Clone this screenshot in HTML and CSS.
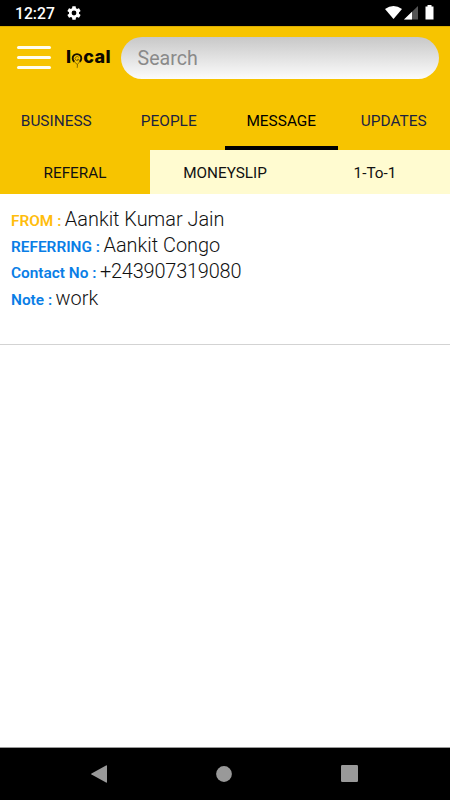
FILE: index.html
```html
<!DOCTYPE html>
<html lang="en">
<head>
<meta charset="utf-8">
<title>Local</title>
<link rel="stylesheet" href="styles.css">
</head>
<body>
<div class="screen">
  <div class="status">
    <span class="clock">12:27</span>
    <svg class="gear" width="16" height="16" viewBox="0 0 24 24"><path fill="#fff" fill-rule="evenodd" d="M19.4 13c.1-.3.1-.7.1-1s0-.7-.1-1l2.200-1.700c.2-.2.2-.4.100-.6l-2-3.500c-.1-.2-.4-.3-.6-.2l-2.500 1c-.5-.4-1.100-.7-1.700-1L14.500 2.400c0-.2-.2-.4-.5-.4h-4c-.3 0-.5.200-.5.400L9.100 5c-.6.3-1.200.6-1.700 1L4.900 5c-.2-.1-.5 0-.6.2l-2 3.500c-.1.200-.1.400.1.600L4.600 11c-.1.300-.1.700-.1 1s0 .7.100 1l-2.200 1.700c-.2.200-.2.400-.1.600l2 3.500c.1.200.4.300.6.200l2.500-1c.5.400 1.100.7 1.700 1l.4 2.600c0 .2.200.4.5.4h4c.3 0 .5-.2.500-.4l.4-2.600c.6-.3 1.200-.6 1.700-1l2.500 1c.2.100.5 0 .6-.2l2-3.500c.1-.2.100-.4-.1-.6zM12 15.600a3.600 3.600 0 1 1 0-7.200 3.600 3.600 0 0 1 0 7.200z"/></svg>
    <svg class="signals" width="50" height="16" viewBox="0 0 50 16">
      <path fill="#fff" d="M0 4Q8.500-2 17 4L8.500 14z"/>
      <path fill="#555" d="M33 1v13.500H19z"/><path fill="#fff" d="M27 6.700v7.800h-8z"/>
      <path fill="#fff" d="M42.500 0h4v1.500h2v13h-8v-13h2z"/>
    </svg>
  </div>
  <header class="top">
    <div class="burger"><i></i><i></i><i></i></div>
    <div class="logo">
      <span>l</span>
      <svg width="12" height="18" viewBox="0 0 12 18"><path fill="none" stroke="#171100" stroke-width="1.900" d="M3.400 9.800A4.300 4.300 0 1 1 8.600 9.800"/><path fill="none" stroke="#6b5600" stroke-width=".8" d="M3.500 9.600q1 2 3 2.800l2.300-2.800M6.500 12.400l-.3 3.400M7.800 5.400a2 2 0 1 0 .2 2h-2"/></svg>
      <span class="rest">cal</span>
    </div>
    <div class="search">Search</div>
  </header>
  <nav class="tabs"><span>BUSINESS</span><span>PEOPLE</span><span class="on">MESSAGE</span><span>UPDATES</span></nav>
  <nav class="subtabs"><span class="on">REFERAL</span><span>MONEYSLIP</span><span>1-To-1</span></nav>
  <main>
    <section class="item">
      <p><b class="from">FROM :</b> <span>Aankit Kumar Jain</span></p>
      <p><b>REFERRING :</b> <span>Aankit Congo</span></p>
      <p><b>Contact No :</b> <span class="phone">+243907319080</span></p>
      <p><b>Note :</b> <span>work</span></p>
    </section>
  </main>
  <footer class="nav">
    <svg width="16" height="18" viewBox="0 0 16 18"><path fill="#999" d="M15 .5Q16 0 16 1v16q0 1-1 .5L.5 9.500q-.6-.5 0-1z"/></svg>
    <svg width="16" height="16" viewBox="0 0 16 16"><circle cx="8" cy="8" r="7.900" fill="#999"/></svg>
    <svg width="17" height="17" viewBox="0 0 17 17"><rect width="17" height="17" rx="1.200" fill="#999"/></svg>
  </footer>
</div>
</body>
</html>
```
FILE: styles.css
```css
* { box-sizing: border-box; }
body { margin: 0; font-family: Roboto, "Liberation Sans", sans-serif; background: #fff; color: #111; }
.screen { width: 450px; height: 800px; display: flex; flex-direction: column; overflow: hidden; }
.status { height: 26px; background: #000; color: #fff; display: flex; align-items: center; padding: 1px 15px 1px; }
.clock { font-size: 15.700px; font-weight: 500; line-height: 24px; width: 51px; padding-top: 2px; }
.signals { margin-left: auto; }
.top { height: 64px; background: #f7c400; border-top: 1px solid #dcae00; display: flex; align-items: flex-start; padding: 10px 11px 0 17px; }
.burger { width: 34px; height: 23px; margin-top: 9px; display: flex; flex-direction: column; justify-content: space-between; }
.burger i { height: 3px; border-radius: 2px; background: #fffdf0; }
.logo { width: 55px; margin: 7px 0 0 15px; display: flex; align-items: flex-start; font-family: Inter, "Open Sans", sans-serif; font-weight: 800; font-size: 18px; line-height: 26px; color: #0c0900; letter-spacing: -.3px; }
.logo svg { margin: 8px 0 0; flex: none; }
.rest { letter-spacing: .3px; margin-left: .5px; }
.search { flex: 1; height: 42px; border-radius: 21px; background: linear-gradient(#c8c8c8, #fcfcfc); padding-left: 16.500px; font-size: 19.600px; line-height: 44px; color: #8a8a8a; }
.tabs { height: 60px; background: #f7c400; display: grid; grid-template-columns: repeat(4, 1fr); font-size: 15.400px; line-height: 62px; text-align: center; color: #1c2340; }
.tabs span { height: 60px; }
.tabs .on { border-bottom: 4px solid #000; color: #000; }
.subtabs { height: 44px; display: grid; grid-template-columns: repeat(3, 1fr); font-size: 15.300px; line-height: 46px; text-align: center; background: #fffbd0; }
.subtabs span { height: 44px; }
.subtabs .on { background: #f7c400; }
main { flex: 1; }
.item { height: 151px; padding: 13px 11px 0; border-bottom: 1px solid #d3d3d3; }
p { margin: 0; height: 26.200px; line-height: 26px; font-size: 19.900px; font-weight: 300; white-space: nowrap; display: flex; gap: 3.500px; align-items: baseline; }
b { font-size: 15.400px; font-weight: 600; color: #0a7ee6; }
.from { color: #ffbd0c; }
.phone { letter-spacing: -.18px; }
.nav { height: 53px; background: #000; border-top: 1px solid #999; display: flex; align-items: center; justify-content: space-between; padding: 0 92px 1px 91px; }
```
